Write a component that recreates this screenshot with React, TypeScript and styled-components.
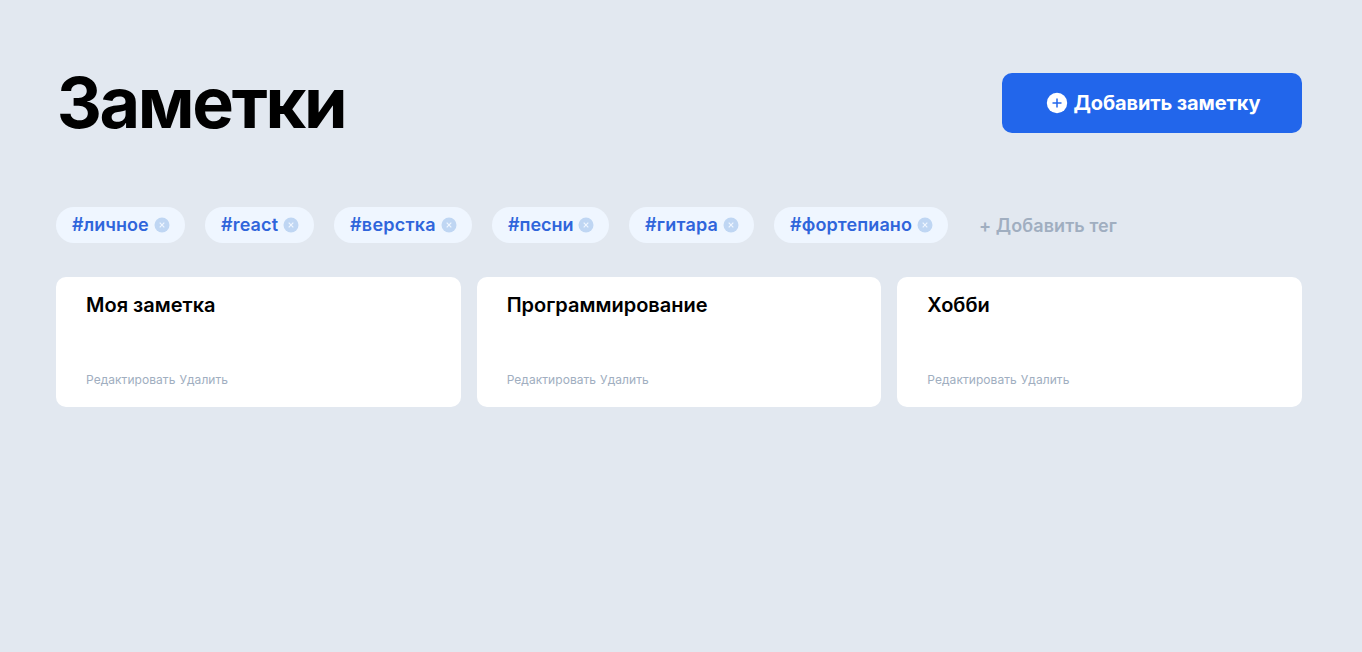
import React from "react";
import styled, { createGlobalStyle } from "styled-components";

const GlobalStyle = createGlobalStyle`
  * { box-sizing: border-box; }
  body { margin: 0; background: #e2e8f0; font-family: Inter, "Liberation Sans", sans-serif; color: #000; }
  button { font-family: inherit; border: 0; padding: 0; background: none; cursor: pointer; }
`;
const Page = styled.main`
  padding: 60px 60px 0 56px;
`;
const Header = styled.header`
  display: flex;
  justify-content: space-between;
  align-items: center;
  height: 86px;
`;
const Title = styled.h1`
  margin: 0;
  padding-left: 0.7px;
  font-size: 70px;
  line-height: 86px;
  font-weight: 700;
  letter-spacing: -2.35px;
`;
const AddNote = styled.button`
  display: flex;
  align-items: center;
  justify-content: center;
  gap: 6px;
  width: 300px;
  height: 60px;
  padding-left: 2px;
  border-radius: 10px;
  background: #2266eb;
  color: #fff;
  font-size: 20px;
  font-weight: 700;
  letter-spacing: -0.12px;
`;
const Tags = styled.div`
  display: flex;
  align-items: center;
  gap: 20px;
  margin-top: 61px;
`;
const TagPill = styled.span<{ $width: number }>`
  display: flex;
  align-items: center;
  justify-content: space-between;
  width: ${({ $width }) => $width}px;
  height: 36px;
  padding: 0 15px 0 16px;
  border-radius: 18px;
  background: #eff6ff;
  color: #2f65db;
  font-size: 18px;
  font-weight: 600;
  white-space: nowrap;
`;
const TagName = styled.span<{ $tracking: number }>`
  padding-bottom: 2px;
  letter-spacing: ${({ $tracking }) => $tracking}px;
`;
const AddTag = styled.button`
  margin-left: 11px;
  color: #a0aec0;
  font-size: 18px;
  font-weight: 600;
  letter-spacing: 0.08px;
`;
const Cards = styled.section`
  display: grid;
  grid-template-columns: repeat(3, 1fr);
  gap: 16px;
  margin-top: 34px;
`;
const Card = styled.article`
  display: flex;
  flex-direction: column;
  justify-content: space-between;
  height: 130px;
  padding: 16px 30px 19px;
  border-radius: 10px;
  background: #fff;
`;
const CardTitle = styled.h2`
  margin: 0;
  font-size: 20px;
  line-height: 24px;
  font-weight: 600;
`;
const Actions = styled.div`
  display: flex;
  gap: 4px;
`;
const Action = styled.button`
  color: #a0aec0;
  font-size: 12px;
  line-height: 16px;
  letter-spacing: 0.05px;
`;

const PlusIcon = () => (
  <svg width="22" height="22" viewBox="0 0 22 22">
    <circle cx="11" cy="11" r="10.2" fill="#fff" />
    <path d="M11 6.5v9M6.5 11h9" stroke="#2266eb" strokeWidth="1.5" />
  </svg>
);
const CloseIcon = () => (
  <svg width="16" height="16" viewBox="0 0 16 16">
    <circle cx="8" cy="8" r="7.5" fill="#bfd6f3" />
    <path d="M5.7 5.7l4.6 4.6M10.3 5.7l-4.6 4.6" stroke="#eff6ff" strokeWidth="1.2" />
  </svg>
);

const tags = [
  { name: "личное", width: 129, tracking: 0 },
  { name: "react", width: 109, tracking: 0.15 },
  { name: "верстка", width: 138, tracking: 0.25 },
  { name: "песни", width: 117, tracking: 0 },
  { name: "гитара", width: 125, tracking: 0.2 },
  { name: "фортепиано", width: 174, tracking: 0.12 },
];
const notes = ["Моя заметка", "Программирование", "Хобби"];

export default function App() {
  return (
    <Page>
      <GlobalStyle />
      <Header>
        <Title>Заметки</Title>
        <AddNote><PlusIcon />Добавить заметку</AddNote>
      </Header>
      <Tags>
        {tags.map((tag) => (
          <TagPill key={tag.name} $width={tag.width}>
            <TagName $tracking={tag.tracking}>{"#" + tag.name}</TagName>
            <CloseIcon />
          </TagPill>
        ))}
        <AddTag>+ Добавить тег</AddTag>
      </Tags>
      <Cards>
        {notes.map((note) => (
          <Card key={note}>
            <CardTitle>{note}</CardTitle>
            <Actions><Action>Редактировать</Action><Action>Удалить</Action></Actions>
          </Card>
        ))}
      </Cards>
    </Page>
  );
}
